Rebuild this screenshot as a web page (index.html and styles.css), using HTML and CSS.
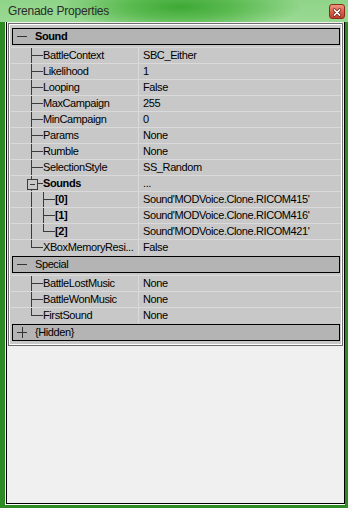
FILE: index.html
```html
<!DOCTYPE html>
<html lang="en">
<head>
  <meta charset="UTF-8">
  <title>Grenade Properties</title>
  <link rel="stylesheet" href="styles.css">
</head>
<body>
  <div class="window">
    <div class="titlebar">
      <span class="title">Grenade Properties</span>
      <span class="close">
        <svg width="16" height="15" viewBox="0 0 16 15">
          <path d="M5 4.5 L11 10.5 M11 4.5 L5 10.5" stroke="#6b1a10" stroke-width="3.4" stroke-linecap="round"/>
          <path d="M5 4.5 L11 10.5 M11 4.5 L5 10.5" stroke="#fff" stroke-width="1.8" stroke-linecap="round"/>
        </svg>
      </span>
    </div>
    <div class="client">
      <div class="client-in">
        <div class="grid">
          <!-- Sound category -->
          <div class="cat"><span class="toggle minus"></span><b>Sound</b></div>
          <div class="row"><div class="name"><i class="t tee"></i>BattleContext</div><div class="val">SBC_Either</div></div>
          <div class="row"><div class="name"><i class="t tee"></i>Likelihood</div><div class="val">1</div></div>
          <div class="row"><div class="name"><i class="t tee"></i>Looping</div><div class="val">False</div></div>
          <div class="row"><div class="name"><i class="t tee"></i>MaxCampaign</div><div class="val">255</div></div>
          <div class="row"><div class="name"><i class="t tee"></i>MinCampaign</div><div class="val">0</div></div>
          <div class="row"><div class="name"><i class="t tee"></i>Params</div><div class="val">None</div></div>
          <div class="row"><div class="name"><i class="t tee"></i>Rumble</div><div class="val">None</div></div>
          <div class="row"><div class="name"><i class="t tee"></i>SelectionStyle</div><div class="val">SS_Random</div></div>
          <div class="row"><div class="name"><i class="t expander"></i><b>Sounds</b></div><div class="val">...</div></div>
          <div class="row"><div class="name"><i class="t pipe"></i><i class="t tee"></i><b>[0]</b></div><div class="val">Sound'MODVoice.Clone.RICOM415'</div></div>
          <div class="row"><div class="name"><i class="t pipe"></i><i class="t tee"></i><b>[1]</b></div><div class="val">Sound'MODVoice.Clone.RICOM416'</div></div>
          <div class="row"><div class="name"><i class="t pipe"></i><i class="t end"></i><b>[2]</b></div><div class="val">Sound'MODVoice.Clone.RICOM421'</div></div>
          <div class="row"><div class="name"><i class="t end"></i>XBoxMemoryResi...</div><div class="val">False</div></div>

          <!-- Special category -->
          <div class="cat"><span class="toggle minus"></span>Special</div>
          <div class="row"><div class="name"><i class="t tee"></i>BattleLostMusic</div><div class="val">None</div></div>
          <div class="row"><div class="name"><i class="t tee"></i>BattleWonMusic</div><div class="val">None</div></div>
          <div class="row"><div class="name"><i class="t end"></i>FirstSound</div><div class="val">None</div></div>

          <div class="cat"><span class="toggle plus"></span>{Hidden}</div>
        </div>
      </div>
    </div>
  </div>
</body>
</html>
```

FILE: styles.css
```css
* {
  box-sizing: border-box;
}
body {
  margin: 0;
  width: 348px;
  height: 508px;
  background-color: #2e8b24;
  font-family: "Liberation Sans", Arial, sans-serif;
  font-size: 11px;
  color: #000;
}
.window {
  display: flex;
  flex-direction: column;
  height: 508px;
}
.titlebar {
  height: 22px;
  display: flex;
  align-items: center;
  justify-content: space-between;
  padding: 0 3px 0 8px;
  background: radial-gradient(ellipse 120px 26px at 52% 30%, #3da934 0%, #5cbb52 45%, rgba(140, 212, 132, 0) 100%),
              linear-gradient(#8fd488, #9ad993);
}
.title {
  font-size: 12px;
  letter-spacing: -0.2px;
  color: #2b2b2b;
}
.close {
  width: 16px;
  height: 15px;
  border: 1px solid #8a2a1c;
  border-radius: 3px;
  background: linear-gradient(#ee9a84, #d9604a 50%, #c3412c);
  display: flex;
}
.client {
  flex: 1;
  margin: 0 3px 3px 5px;
  border-left: 1px solid #fff;
  border-bottom: 1px solid #fff;
  display: flex;
}
.client-in {
  flex: 1;
  background-color: #f0f0f0;
  border-left: 1px solid #000;
  border-right: 1px solid #000;
  border-bottom: 1px solid #000;
  padding: 1px 1px 0 1px;
}
.grid {
  border: 1px solid #6d6d6d;
  box-shadow: inset 1px 1px 0 #fff, inset -1px -1px 0 #fff;
  padding: 3px 1px 2px 2px;
  background-color: #c8c8c8;
  letter-spacing: -0.4px;
}
.cat {
  height: 17px;
  margin: 1px 1px 2px 1px;
  border: 1px solid #000;
  background-color: #b4b4b4;
  display: flex;
  align-items: center;
  line-height: 15px;
}
.toggle {
  width: 10px;
  height: 11px;
  margin: 0 8px 0 4px;
  position: relative;
}
.toggle::before {
  content: "";
  position: absolute;
  left: 0;
  right: 0;
  top: 5px;
  height: 1px;
  background-color: #333;
}
.toggle.plus::after {
  content: "";
  position: absolute;
  top: 0;
  bottom: 0;
  left: 5px;
  width: 1px;
  background-color: #333;
}
.row {
  height: 16px;
  display: grid;
  grid-template-columns: 127px 1fr;
  border-top: 1px solid #dadada;
}
.name {
  display: flex;
  padding-left: 20px;
  line-height: 15px;
  white-space: nowrap;
  overflow: hidden;
}
.val {
  border-left: 1px solid #dadada;
  padding-left: 4px;
  line-height: 15px;
  white-space: nowrap;
  overflow: hidden;
}
/* tree connector pieces */
.t {
  width: 12px;
  flex: none;
  position: relative;
}
.t::before {
  content: "";
  position: absolute;
  left: 0;
  width: 1px;
  top: -1px;
  bottom: 0;
  background-color: #3a3a3a;
}
.t.end::before {
  bottom: 7px;
}
.t.tee::after,
.t.end::after {
  content: "";
  position: absolute;
  left: 0;
  right: 0;
  top: 7px;
  height: 1px;
  background-color: #3a3a3a;
}
.t.expander {
  background: linear-gradient(#3a3a3a, #3a3a3a) 5px 7px / 7px 1px no-repeat;
}
.t.expander::after {
  content: "";
  position: absolute;
  left: -4px;
  top: 3px;
  width: 9px;
  height: 9px;
  border: 1px solid #3a3a3a;
  background: linear-gradient(#3a3a3a, #3a3a3a) center / 5px 1px no-repeat, #c8c8c8;
}
```
